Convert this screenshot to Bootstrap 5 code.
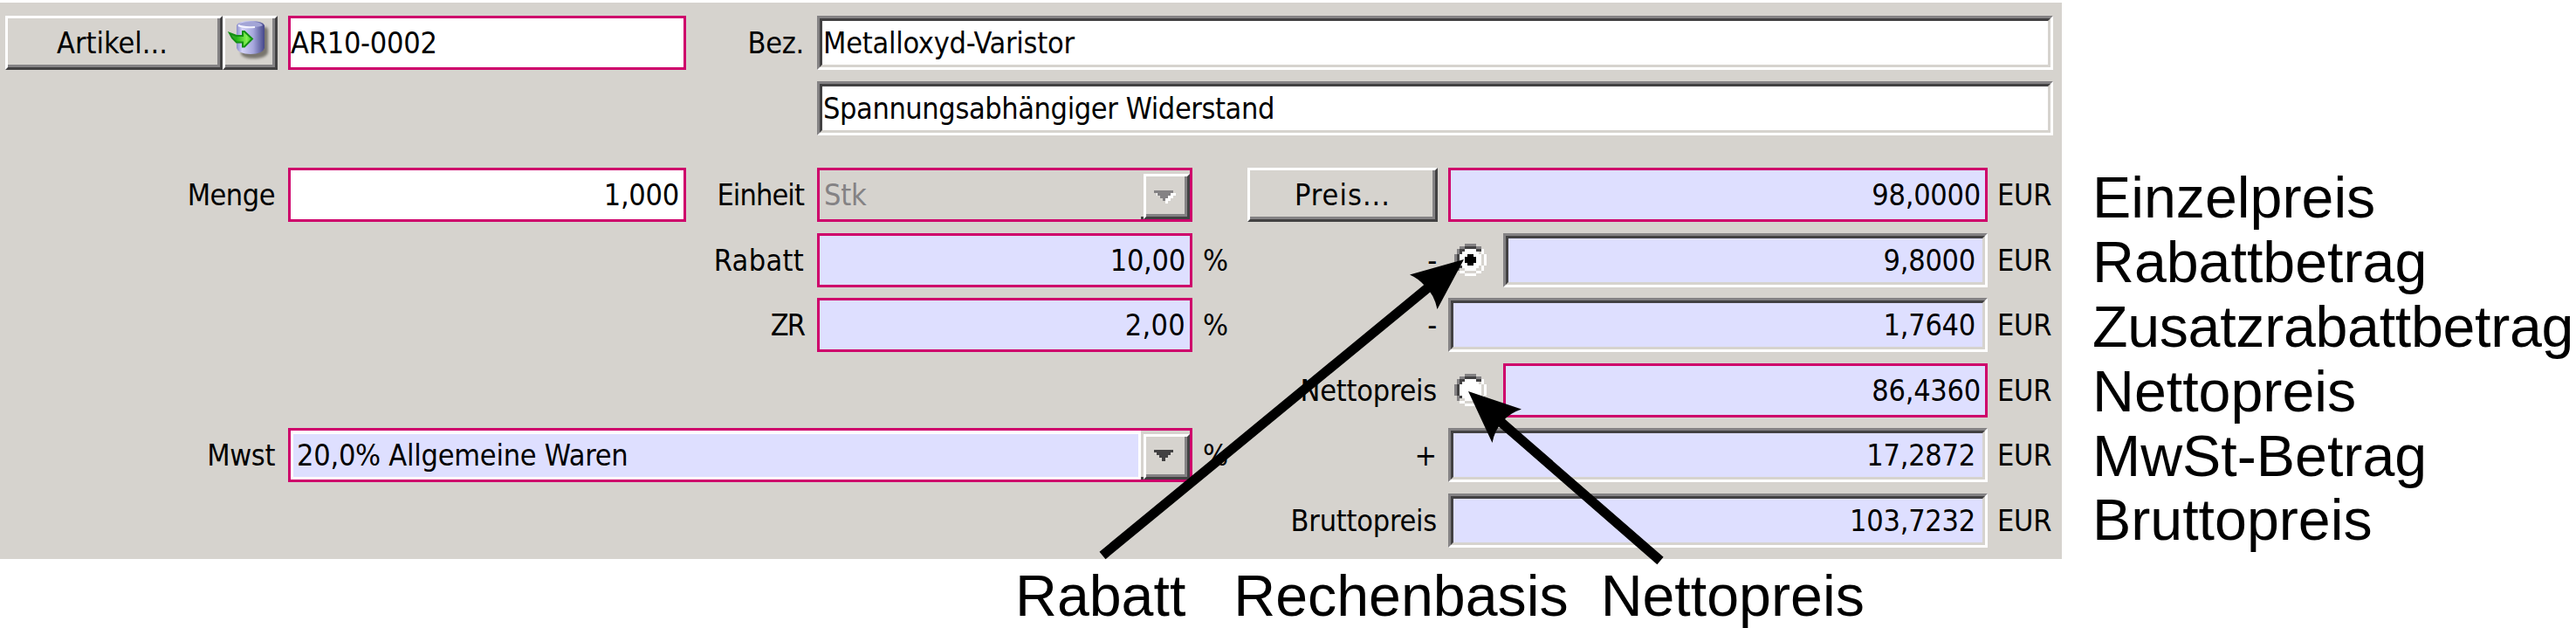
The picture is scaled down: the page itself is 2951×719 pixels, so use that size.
<!DOCTYPE html>
<html lang="de">
<head>
<meta charset="utf-8">
<title>Artikelposition</title>
<link href="https://cdn.jsdelivr.net/npm/bootstrap@5.3.0/dist/css/bootstrap.min.css" rel="stylesheet">
<style>
:root{--face:#d6d3ce;--shade:#848284;--dark:#424142;--must:#ce006b;--calc:#dedfff}
body{width:2951px;height:719px;overflow:hidden;color:#000;background:#fff;font-family:"Liberation Sans",Arial,sans-serif}
.mask{width:2362px;height:637px;margin-top:3px;padding:15px 0 0 6px;background:var(--face);
  font-family:"DejaVu Sans Condensed","DejaVu Sans",sans-serif;font-size:34px;letter-spacing:-.25px;
  display:grid;grid-template-columns:324px 456px 150px 430px 63px 230px 618px 75px;
  grid-template-rows:75px 99px 75px 74px 75px 74px 75px 62px;align-items:start;flex:none}
.mask>*{height:62px;line-height:62px;white-space:nowrap;min-width:0}
.c1{grid-column:1}.c2{grid-column:2}.c3{grid-column:3}.c4{grid-column:4}.c5{grid-column:5}.c6{grid-column:6}.c7{grid-column:7}.c8{grid-column:8}
.wide{grid-column:4/span 5;width:1416px}
.span-tax{grid-column:2/span 3}
.r1{grid-row:1}.r2{grid-row:2}.r3{grid-row:3}.r4{grid-row:4}.r5{grid-row:5}.r6{grid-row:6}.r7{grid-row:7}.r8{grid-row:8}
.cap{text-align:right;padding-right:15px}
.c6.cap{padding-right:13px}
.unit{padding-left:12px}
.c8.unit{padding-left:11px}
.mask .field{background:#fff;border:3px solid var(--must);line-height:56px;padding:0 5px 0 0}
.mask .num{text-align:right}
.mask .sunken{border:3px solid;border-color:var(--shade) #fff #fff var(--shade);position:relative;padding:0 11px 0 4px}
.sunken::before{content:"";position:absolute;inset:0;border:3px solid;border-color:var(--dark) var(--face) var(--face) var(--dark)}
.mask .calc{background:var(--calc)}
.raised{background:var(--face);border:3px solid;border-color:#fff var(--dark) var(--dark) #fff;box-shadow:inset -3px -3px var(--shade);padding:0;font:inherit;letter-spacing:inherit;color:#000;border-radius:0;height:62px;line-height:48px}
.mask .combo{padding:0 0 0 5px}
.drop{width:56px;height:56px;background:var(--face);padding:4px 0 0 3px;box-shadow:inset 0 -3px var(--dark)}
.drop .raised{width:53px;height:52px}
.mask .filled{padding-left:7px;box-shadow:inset 0 4px #fff,inset 3px -3px #fff}
.sep{border-left:3px solid #fff;margin-left:auto}
.r6c{width:63px}
.legend{font-size:66.3px;line-height:74px;padding:189px 0 0 35px;white-space:nowrap}
.legend div{height:73.9px}
.foot{font-size:66.3px;line-height:74px;height:79px;padding:5px 0 0 1163px;gap:55px;white-space:nowrap}
.arrows{position:absolute;left:0;top:0;pointer-events:none}
</style>
</head>
<body class="position-relative">
<svg width="0" height="0" class="position-absolute">
  <symbol id="ring" viewBox="0 0 12 12">
    <path fill="#848284" d="M4 0h4v1H4zM2 1h2v1H2zM8 1h2v1H8zM1 2h1v2H1zM0 4h1v4H0zM1 8h1v2H1z"/>
    <path fill="#fff" d="M4 2h4v1h1v1h1v4H9v1H8v1H4V9H3V8H2V4h1V3h1zM10 2h1v2h-1zM11 4h1v4h-1zM10 8h1v2h-1zM8 10h2v1H8zM4 11h4v1H4zM2 10h2v1H2z"/>
    <path fill="#424142" d="M4 1h4v1H4zM2 2h2v1H2zM8 2h2v1H8zM2 3h1v1H2zM1 4h1v4H1zM2 8h1v1H2z"/>
  </symbol>
</svg>
<div class="d-flex">
  <main class="mask">
    <div class="c1 r1 d-flex">
      <button class="raised" style="width:249px;padding-right:4px;letter-spacing:0">Artikel...</button>
      <button class="raised d-flex" style="width:63px">
        <svg width="54" height="53" viewBox="258 21 54 53">
          <defs>
            <linearGradient id="cyl"><stop offset="0" stop-color="#8c8ecb"/><stop offset=".2" stop-color="#d4d4f8"/><stop offset=".6" stop-color="#a5a6dc"/><stop offset="1" stop-color="#45478a"/></linearGradient>
            <linearGradient id="go"><stop offset="0" stop-color="#4f8f4a"/><stop offset=".3" stop-color="#21b514"/><stop offset=".75" stop-color="#84f052"/><stop offset="1" stop-color="#2fc31c"/></linearGradient>
            <filter id="soft"><feGaussianBlur stdDeviation="1.6"/></filter>
          </defs>
          <path d="M277 31h26q4 0 4 4v25q-2 7-17 7-11 0-14-5z" fill="#5a5650" opacity=".75" filter="url(#soft)"/>
          <path d="M271 29q2-5 16-5t16 5v26q-2 7-16 7t-16-7z" fill="url(#cyl)"/>
          <path d="M272 29q3-4 15-4t14 4q-3 2-14 2t-15-2z" fill="#a3a5d6"/>
          <path d="M273 29q6 3 19 2" fill="none" stroke="#f4f4ff" stroke-width="2"/>
          <path d="M263 38l8 3h7v-5l2 0 9 8.500-9 9-2 0v-5h-7l-5-5z" fill="url(#go)" stroke="#139013" stroke-width="2"/>
        </svg>
      </button>
    </div>
    <div class="c2 r1 field">AR10-0002</div>
    <div class="c3 r1 cap">Bez.</div>
    <div class="wide r1 field sunken">Metalloxyd-Varistor</div>
    <div class="wide r2 field sunken" style="letter-spacing:-.4px">Spannungsabhängiger Widerstand</div>

    <div class="c1 r3 cap" style="letter-spacing:-.5px">Menge</div>
    <div class="c2 r3 field num">1,000</div>
    <div class="c3 r3 cap" style="letter-spacing:-.9px">Einheit</div>
    <div class="c4 r3 field combo d-flex" style="background:var(--face);color:var(--shade)">Stk
      <div class="drop ms-auto"><div class="raised"><svg class="d-block" width="47" height="46" shape-rendering="crispEdges"><path d="M9 16h22v3h-3v3h-3v3h-3v3h-3v-3h-3v-3h-3v-3H9z" fill="#fff" transform="translate(3 3)"/><path d="M9 16h22v3h-3v3h-3v3h-3v3h-3v-3h-3v-3h-3v-3H9z" fill="#848284"/></svg></div></div>
    </div>
    <div class="c6 r3 d-flex"><button class="raised" style="width:218px;letter-spacing:1px">Preis...</button></div>
    <div class="c7 r3 field calc num">98,0000</div>
    <div class="c8 r3 unit">EUR</div>

    <div class="c3 r4 cap" style="letter-spacing:.3px">Rabatt</div>
    <div class="c4 r4 field calc num">10,00</div>
    <div class="c5 r4 unit">%</div>
    <div class="c6 r4 cap">-</div>
    <div class="c7 r4 d-flex">
      <div class="r6c"><svg class="d-block" style="margin:12px 0 0 7px" width="37" height="37" viewBox="0 0 12 12" shape-rendering="crispEdges"><use href="#ring"/><path d="M5 4h2v1h1v2H7v1H5V7H4V5h1z"/></svg></div>
      <div class="field sunken calc num flex-fill">9,8000</div>
    </div>
    <div class="c8 r4 unit">EUR</div>

    <div class="c3 r5 cap" style="letter-spacing:-2px">ZR</div>
    <div class="c4 r5 field calc num" style="letter-spacing:.3px">2,00</div>
    <div class="c5 r5 unit">%</div>
    <div class="c6 r5 cap">-</div>
    <div class="c7 r5 field sunken calc num">1,7640</div>
    <div class="c8 r5 unit">EUR</div>

    <div class="c6 r6 cap">Nettopreis</div>
    <div class="c7 r6 d-flex">
      <div class="r6c"><svg class="d-block" style="margin:12px 0 0 7px" width="37" height="37" viewBox="0 0 12 12" shape-rendering="crispEdges"><use href="#ring"/></svg></div>
      <div class="field calc num flex-fill">86,4360</div>
    </div>
    <div class="c8 r6 unit">EUR</div>

    <div class="c1 r7 cap" style="letter-spacing:-.4px">Mwst</div>
    <div class="span-tax r7 field calc combo filled d-flex">20,0% Allgemeine Waren
      <div class="sep"></div>
      <div class="drop"><div class="raised"><svg class="d-block" width="47" height="46" shape-rendering="crispEdges"><path d="M9 15h22v3h-3v3h-3v3h-3v4h-4v-4h-3v-3h-3v-3H9z" fill="#424142"/></svg></div></div>
    </div>
    <div class="c5 r7 unit">%</div>
    <div class="c6 r7 cap">+</div>
    <div class="c7 r7 field sunken calc num">17,2872</div>
    <div class="c8 r7 unit">EUR</div>

    <div class="c6 r8 cap">Bruttopreis</div>
    <div class="c7 r8 field sunken calc num">103,7232</div>
    <div class="c8 r8 unit">EUR</div>
  </main>
  <aside class="legend">
    <div>Einzelpreis</div><div>Rabattbetrag</div><div style="letter-spacing:-.3px">Zusatzrabattbetrag</div><div>Nettopreis</div><div>MwSt-Betrag</div><div>Bruttopreis</div>
  </aside>
</div>
<div class="foot d-flex"><span>Rabatt</span><span>Rechenbasis</span><span style="margin-left:-18px">Nettopreis</span></div>
<svg class="arrows" width="2951" height="719">
  <path d="M1263 636L1640 326M1902 642L1718 482" stroke="#000" stroke-width="11"/>
  <path d="M1677 297L1615 314.500Q1625 319 1632 327Q1643 337 1646.500 354ZM1682 448L1743 468.500Q1729 473 1721 483Q1712 493 1709.500 507Z"/>
</svg>
<script src="https://cdn.jsdelivr.net/npm/bootstrap@5.3.0/dist/js/bootstrap.bundle.min.js"></script>
</body>
</html>
